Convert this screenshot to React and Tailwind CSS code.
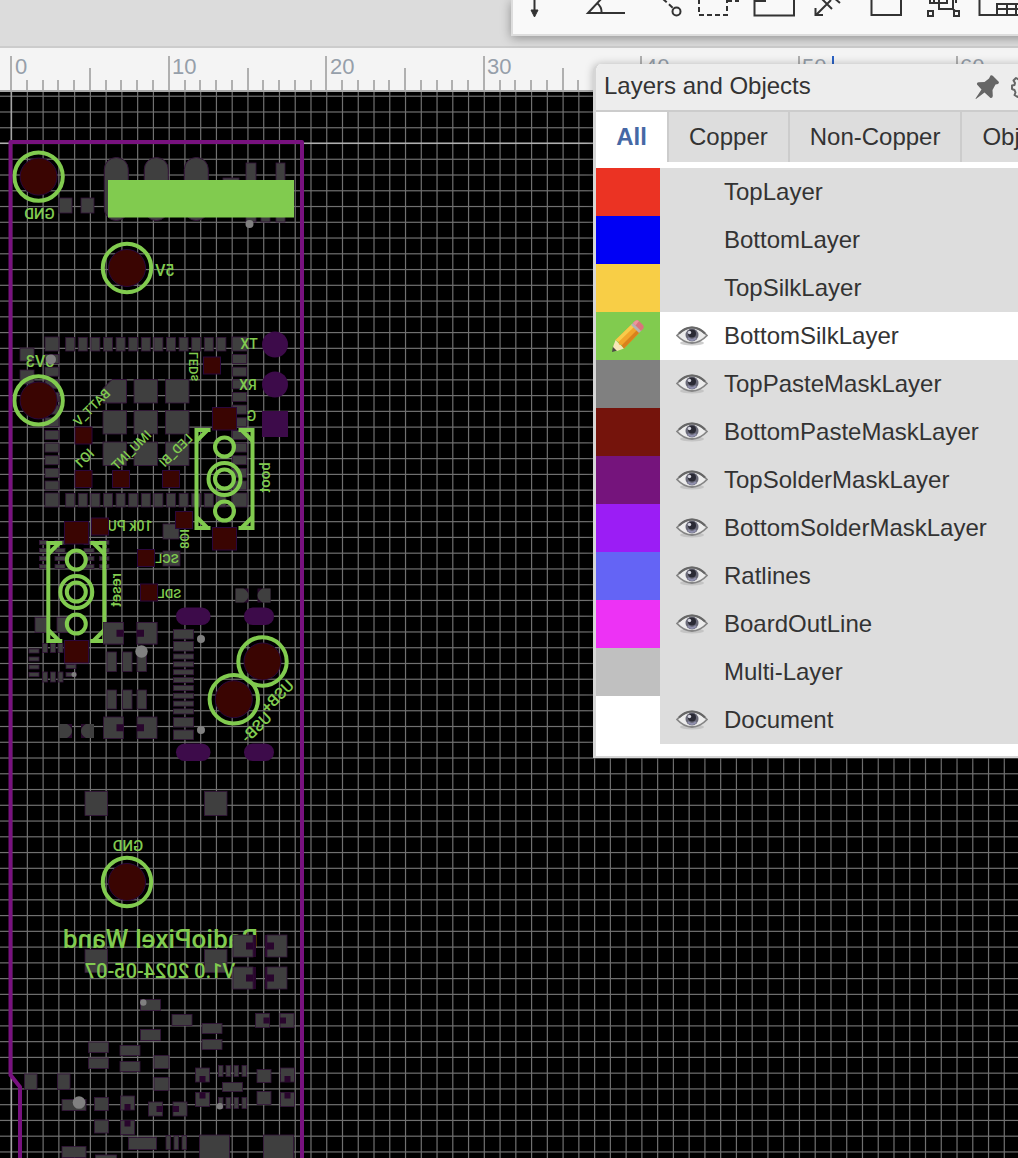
import React from "react";

const STEP = 15.757;
const ORIGIN_X = 11.5;
const ORIGIN_Y = 143.4;
const SILK = "#81cb4f";

const layers = [
  { name: "TopLayer", swatch: "bg-[#eb3323]", visible: false },
  { name: "BottomLayer", swatch: "bg-[#0000f5]", visible: false },
  { name: "TopSilkLayer", swatch: "bg-[#f8ce46]", visible: false },
  { name: "BottomSilkLayer", swatch: "bg-[#81cb4f]", visible: true, active: true },
  { name: "TopPasteMaskLayer", swatch: "bg-[#808080]", visible: true },
  { name: "BottomPasteMaskLayer", swatch: "bg-[#75140c]", visible: true },
  { name: "TopSolderMaskLayer", swatch: "bg-[#75147c]", visible: true },
  { name: "BottomSolderMaskLayer", swatch: "bg-[#9b1df5]", visible: true },
  { name: "Ratlines", swatch: "bg-[#6464f5]", visible: true },
  { name: "BoardOutLine", swatch: "bg-[#ed32f5]", visible: true },
  { name: "Multi-Layer", swatch: "bg-[#c0c0c0]", visible: false },
  { name: "Document", swatch: "bg-white", visible: true },
];

const range = (n) => Array.from({ length: n }, (_, i) => i);

/* ---------- Toolbar ---------- */

const tools = [
  { label: "Arrow", x: 513, w: "w-[45px]", width: 45, art: (
    <>
      <path d="M534.5 0V12" />
      <path d="M531 10h7l-3.500 7z" fill="#333" strokeWidth="1" />
    </>
  ) },
  { label: "Angle", x: 558, w: "w-[92px]", width: 92, art: (
    <path d="M625 13H588L602 -2M597 3Q602 7 601.500 13" />
  ) },
  { label: "Track", x: 650, w: "w-[42px]", width: 42, art: (
    <>
      <path d="M663 -1L673 8" strokeDasharray="5 3" />
      <circle cx="676.500" cy="11.500" r="4" />
    </>
  ) },
  { label: "Select area", x: 692, w: "w-[53px]", width: 53, art: (
    <>
      <path d="M699 -1V15H727V-1" strokeDasharray="5 3" />
      <path d="M727 1H739" strokeDasharray="5 3" />
    </>
  ) },
  { label: "Board outline", x: 745, w: "w-[58px]", width: 58, art: (
    <path d="M754.500 -1V15.500H794V-4M754.500 1H765V-2" />
  ) },
  { label: "Dimension", x: 803, w: "w-[54px]", width: 54, art: (
    <path d="M816 15L831 0M815.500 8V15H823M822 -1L832 9M833 -3L840 3" />
  ) },
  { label: "Rectangle", x: 857, w: "w-[58px]", width: 58, art: (
    <path d="M871.500 -1V15H901V-1" />
  ) },
  { label: "Group", x: 915, w: "w-[55px]", width: 55, art: (
    <path d="M928 11h5v5h-5zM954 11h5v5h-5zM934 -1V3H947V-1M939 -1V9H953V-1M930 0V3H934M953 9L955 11M956 3V-2" />
  ) },
  { label: "Panelize", x: 970, w: "w-[60px]", width: 60, art: (
    <path d="M979.500 -1V15H1022M997 15V4H1022M997 9H1022M1007 4V15M1016 4V15" />
  ) },
];

function Toolbar() {
  return (
    <div
      role="toolbar"
      aria-label="PCB tools"
      className="absolute top-0 left-[511px] flex h-9 border-b-2 border-l-2 border-[#dddddd] bg-[#f9f9f9] shadow-[0_2px_10px_rgba(0,0,0,0.35)]"
    >
      {tools.map((t) => (
        <button key={t.label} type="button" aria-label={t.label} className={`h-full shrink-0 ${t.w}`}>
          <svg
            className="block h-[34px] w-full"
            viewBox={`${t.x} 0 ${t.width} 34`}
            fill="none"
            stroke="#333"
            strokeWidth="2"
          >
            {t.art}
          </svg>
        </button>
      ))}
    </div>
  );
}

/* ---------- Ruler ---------- */

function Ruler() {
  return (
    <svg className="block h-[44px] w-full shrink-0 bg-[#f4f4f4]" aria-label="Horizontal ruler in millimetres">
      {range(240).map((i) => {
        const x = Math.round(ORIGIN_X - 1.3 + i * STEP);
        const top = i % 10 === 0 ? 8 : i % 5 === 0 ? 20 : 32;
        return <rect key={i} x={x} y={top} width="2" height={43 - top} fill="#b0b0b0" />;
      })}
      {range(7).map((i) => (
        <text
          key={i}
          x={Math.round(ORIGIN_X + i * 10 * STEP) + 3}
          y="26"
          fontFamily="Liberation Sans, Arial, sans-serif"
          fontSize="22"
          fill="#969faa"
        >
          {i * 10}
        </text>
      ))}
      <rect x="832" y="8" width="2" height="35" fill="#2b62c4" />
      <rect x="0" y="42" width="100%" height="2" fill="#a8a8a8" />
    </svg>
  );
}

/* ---------- Board ---------- */

const pads = [
  [59, 198, 13, 15], [81, 198, 13, 15],
  [246, 163, 10, 59], [276, 163, 9, 59], [223, 178, 16, 30], [261, 190, 9, 32],
  [45, 337, 14, 14], [232, 337, 15, 14], [45, 493, 14, 14], [232, 493, 15, 14],
  [20, 348, 14, 13], [20, 370, 14, 14],
  ...range(13).flatMap((i) => [
    [65.7 + i * 12.6, 337.5, 9, 13.5],
    [65.7 + i * 12.6, 493.5, 9, 13.5],
  ]),
  ...range(11).flatMap((i) => [
    [45, 354.5 + i * 12.65, 14, 9],
    [232.5, 354.5 + i * 12.65, 14, 9],
  ]),
  [134, 379.5, 23.5, 23.5], [165.5, 379.5, 23.5, 23.5],
  ...[103, 134, 165.5].flatMap((x) => [[x, 410.5, 23.5, 23.5], [x, 442, 23.5, 23.5]]),
  [163, 524, 16, 15], [163, 551, 17, 15],
  ...[540.5, 548.5, 556.5, 564.5].flatMap((y) => [
    [39.5, y, 8, 4], [55, y, 10, 4], [84, y, 10, 4], [99.5, y, 9.5, 4],
  ]),
  [35, 617.5, 12, 15], [57, 617.5, 12, 15],
  ...[649, 657, 665, 672.5].map((y) => [29, y, 10, 4]),
  ...[42.5, 50.5, 58].flatMap((x) => [[x, 643.5, 5, 9], [x, 672, 5, 10]]),
  [66, 664.5, 10, 4], [66, 672.5, 10, 4],
  ...[107, 122.5, 137].flatMap((x) => [[x, 652, 9.5, 19.5], [x, 690, 9.5, 19]]),
  [173.5, 629.5, 20, 9.5], [173.5, 641.5, 20, 9.5],
  ...range(8).map((i) => [173.5, 654 + i * 7.85, 20, 5]),
  [173.5, 717.5, 20, 9.5], [173.5, 730, 20, 9.5],
  [85, 791.5, 22.5, 24], [204.5, 791.5, 22.5, 24], [85, 949.5, 22.5, 23], [204.5, 949.5, 22.5, 23],
  [140.5, 999.5, 20, 11], [172, 1014.5, 20, 11], [140.5, 1029.5, 20, 11],
  [202, 1023.5, 20, 10], [202, 1039.5, 20, 10],
  [88.5, 1042, 20, 10.5], [88.5, 1058, 20, 10.5], [120, 1045.5, 20, 10], [120, 1061.5, 20, 10],
  [154, 1055.5, 15, 13], [154, 1077.5, 15, 13],
  [24.5, 1074, 12.5, 15.5], [57.5, 1074, 12.5, 15.5],
  [62, 1099.5, 24, 11], [94.5, 1097.5, 14, 13], [94.5, 1120, 14, 13],
  [257, 1069.5, 14, 13], [257, 1091.5, 14, 13], [222.5, 1082.5, 20, 9],
  ...[218.5, 226, 234, 242].flatMap((x) => [[x, 1065.5, 4.5, 11], [x, 1097.5, 4.5, 11]]),
  [128.5, 1137.5, 28, 12], [166, 1135.5, 4.5, 14], [174, 1135.5, 4.5, 14], [182, 1135.5, 4.5, 14],
  [199.5, 1135, 30, 30], [263.5, 1135, 30, 30], [62, 1146.5, 24, 11], [95.5, 1155, 21, 10],
];

const notched = [
  [103.5, 622.5, 20, 21.5, "r"], [137, 622.5, 20, 21.5, "l"],
  [103.5, 717, 20, 21.5, "r"], [137, 717, 20, 21.5, "l"],
  [120.5, 1096, 14, 14, "b"], [120.5, 1120.5, 14, 14, "t"],
  [148.5, 1102, 14, 14, "r"], [173, 1102, 14, 14, "l"],
  [195.5, 1068, 14, 14, "b"], [195.5, 1092.5, 14, 14, "t"],
  [280.5, 1068, 14, 14, "b"], [280.5, 1092.5, 14, 14, "t"],
  [255.5, 1013.5, 14, 14, "r"], [280, 1013.5, 14, 14, "l"],
];

const titlePads = [
  [233, 935, 20, 22, "r"], [267, 935, 20, 22, "l"],
  [233, 967, 20, 22, "r"], [267, 967, 20, 22, "l"],
];

const bottomPads = [
  [203.5, 357, 17], [75, 427, 17], [75, 470.5, 17], [112.5, 470.5, 17], [162.5, 470.5, 17],
  [175.5, 511.5, 17], [91.5, 518, 17], [137.5, 549.5, 17], [140.5, 584, 17],
  [212.5, 407.5, 24], [212.5, 527.5, 24], [64.5, 521.5, 24], [64.5, 640.5, 24],
];

const vias = [
  [249.5, 224, 4], [51, 359.5, 5], [74, 674.5, 2.5], [141.5, 651.5, 6.2], [201, 639, 4], [201, 730, 4],
  [143.3, 1002.5, 3.2], [79, 1102.5, 6.3], [219.8, 1106.2, 3.2],
];

const rings = [[38.6, 176.6], [127, 268], [38.6, 400.4], [262.5, 661.5], [233.8, 699.2], [127, 882]];

const labels = [
  ["GND", 39.5, 213.5, 15, 0], ["5V", 165, 270, 16, 0], ["3V3", 40, 361, 16, 0],
  ["TX", 249, 343.5, 14, 0], ["RX", 248, 384.5, 14, 0], ["G", 251.5, 416, 14, 0],
  ["LEDs", 193, 366.5, 13, -90], ["boot", 265, 477.5, 15, -90], ["reset", 115.5, 590, 15, -90],
  ["IO8", 183.5, 539, 13, -90], ["BATT_V", 91.5, 407, 13, -45], ["IO1", 84, 458.5, 14, -45],
  ["IMU_INT", 131, 450, 13, -45], ["LED_BI", 175.5, 450, 13, -45],
  ["10k PU", 130, 526, 14, 0], ["SCL", 167, 558, 13, 0], ["SDL", 169.5, 592.5, 13, 0],
  ["USB+", 277, 696, 16, -45], ["USB-", 256, 727, 16, -45], ["GND", 128, 846, 15, 0],
  ["RadioPixel Wand", 160.5, 939, 26, 0], ["V1.0 2024-05-07", 160, 970.5, 20, 0],
];

function Pad({ x, y, w, h, notch }) {
  const k = w > 16 ? 7 : 6;
  const at = {
    r: [x + w - k, y + h / 2 - k / 2],
    l: [x, y + h / 2 - k / 2],
    t: [x + w / 2 - k / 2, y],
    b: [x + w / 2 - k / 2, y + h - k],
  }[notch];
  return (
    <g>
      <rect x={x} y={y} width={w} height={h} fill="#3f3f3f" stroke="#34153a" strokeWidth="0.800" />
      {at && <rect x={at[0]} y={at[1]} width={k} height={k} fill="#28052c" />}
    </g>
  );
}

function SilkLabel({ text, x, y, size, angle }) {
  return (
    <text
      transform={`translate(${x} ${y}) rotate(${angle}) scale(-1 1)`}
      y={Math.round(size * 0.36)}
      textAnchor="middle"
      fontFamily="Roboto, Liberation Sans, Arial, sans-serif"
      fontWeight="500"
      fontSize={size}
      fill={SILK}
    >
      {text}
    </text>
  );
}

function Switch({ x, y }) {
  return (
    <g transform={`translate(${x} ${y})`} fill="none" stroke={SILK} strokeWidth="4">
      <path d="M-14 -49H-28V49H-14M14 -49H28V49H14" />
      <path d="M-28 -38L-17 -49M28 -38L17 -49M-28 38L-17 49M28 38L17 49" />
      <circle cy="-32" r="9.500" />
      <circle cy="32" r="9.500" />
      <circle r="9.500" />
      <circle r="16" />
    </g>
  );
}

function Board() {
  return (
    <svg className="block min-h-[1066px] w-full flex-1 bg-black" role="img" aria-label="RadioPixel Wand board">
      <g transform="translate(0 -92)">
        <g fill="#707070">
          {range(170).map((i) => (
            <rect key={`v${i}`} x={ORIGIN_X - 0.5 + i * STEP} y="92" width="1.200" height="2400" />
          ))}
          {range(150).map((i) => (
            <rect key={`h${i}`} x="0" y={ORIGIN_Y - 0.5 + (i - 3) * STEP} width="2600" height="1.200" />
          ))}
        </g>
        <rect x="10.500" y="92" width="1.500" height="2400" fill="#a5a5a5" />
        <rect x="0" y="142.500" width="2600" height="1.500" fill="#b0b0b0" />

        {[104.3, 144.3, 184.3].map((x) => (
          <rect key={x} x={x} y="157.500" width="24" height="63" rx="12" fill="#3f3f3f" stroke="#34153a" />
        ))}
        {pads.map(([x, y, w, h], i) => (
          <Pad key={i} x={x} y={y} w={w} h={h} />
        ))}
        {notched.map(([x, y, w, h, n], i) => (
          <Pad key={i} x={x} y={y} w={w} h={h} notch={n} />
        ))}
        <path d="M112 379.500H126.500V403H103V388.500Z" fill="#3f3f3f" stroke="#34153a" />
        {[[235.5, 588.5], [59, 724]].map(([x, y]) => (
          <g key={x} transform={`translate(${x} ${y})`}>
            <path d="M0 0H13V14H0ZM22 0H35V14H22Z" fill="#280a2c" />
            <path d="M0 0H8Q13 3 13 7T8 14H0ZM35 0H27Q22 3 22 7T27 14H35Z" fill="#3f3f3f" />
          </g>
        ))}

        <g fill="#3d0b4a">
          <circle cx="275" cy="344.500" r="13" />
          <circle cx="275" cy="384.500" r="13" />
          <rect x="262" y="411" width="26" height="26" />
          {[607.5, 743.5].map((y) => (
            <g key={y}>
              <rect x="176" y={y} width="34.500" height="17.500" rx="8.700" />
              <rect x="244" y={y} width="30" height="17.500" rx="8.700" />
            </g>
          ))}
        </g>

        {labels.map(([text, x, y, size, angle], i) => (
          <SilkLabel key={i} text={text} x={x} y={y} size={size} angle={angle} />
        ))}
        <rect x="108" y="180" width="186" height="37.500" fill={SILK} />
        <Switch x={224.5} y={479} />
        <Switch x={76.3} y={592} />

        {bottomPads.map(([x, y, s], i) => (
          <rect key={i} x={x} y={y} width={s} height={s === 24 ? 22.5 : s} fill="#3a0502" stroke="#2b073b" />
        ))}
        {[[103.5, 622.5, "r"], [137, 622.5, "l"]].map(([x, y, n]) => (
          <Pad key={x} x={x} y={y} w={20} h={21.5} notch={n} />
        ))}
        {titlePads.map(([x, y, w, h, n], i) => (
          <g key={i}>
            <rect x={n === "r" ? x + 12 : x - 2} y={y} width="11" height={h} fill="#28052c" />
            <Pad x={x} y={y} w={w} h={h} notch={n} />
          </g>
        ))}
        {rings.map(([x, y], i) => (
          <g key={i}>
            <circle cx={x} cy={y} r="24.200" fill="none" stroke={SILK} strokeWidth="4" />
            <circle cx={x} cy={y} r="18.500" fill="#3a0502" stroke="#2b073b" />
          </g>
        ))}
        {vias.map(([x, y, r], i) => (
          <circle key={i} cx={x} cy={y} r={r} fill="#808080" />
        ))}
        <path
          d="M302 2400V142H10.500V1075L20 1087V2400"
          fill="none"
          stroke="#78127f"
          strokeWidth="4"
          strokeLinejoin="round"
        />
      </g>
    </svg>
  );
}

/* ---------- Layers panel ---------- */

function EyeIcon() {
  return (
    <svg className="block h-6 w-8" viewBox="0 0 32 24" aria-hidden="true">
      <ellipse cx="16" cy="19" rx="12" ry="2.500" fill="#b9b9b9" opacity="0.700" />
      <path d="M1 11.500Q8 3.500 16 3.500T31 11.500Q24 19 16 19T1 11.500Z" fill="#ececec" stroke="#858585" strokeWidth="1.800" />
      <path d="M3 9.500Q9 3.500 16 3.500T29 9.500" fill="none" stroke="#666" strokeWidth="2" />
      <circle cx="16" cy="11" r="6.500" fill="#6a6a78" />
      <circle cx="16" cy="9.500" r="4" fill="#2b2b35" />
      <path d="M12 14Q16 18 20 14" fill="none" stroke="#8f8fac" strokeWidth="2" />
      <circle cx="13.500" cy="8.500" r="1.700" fill="#d5d5e0" />
    </svg>
  );
}

function PencilIcon() {
  return (
    <svg className="mx-auto block size-8" viewBox="0 0 32 32" aria-hidden="true">
      <path d="M0 32L1 26L5.500 30.500Z" fill="#4b4a45" />
      <path d="M1 27L3.500 20L12 28.500L5 31Z" fill="#f6e7b6" />
      <path d="M3.500 20L20 4L28 12L12 28.500L10 25L7 24.500L6.500 21Z" fill="#f2a52c" />
      <path d="M3.500 20L20 4L22.500 6.500L6.500 22Z" fill="#f9cb4b" />
      <path d="M9.500 25.500L25.500 9.500L28 12L12 28.500Z" fill="#d9811d" />
      <path d="M19 5L21.500 2.500L29.500 10.500L27 13Z" fill="#b6b3b2" />
      <path d="M21 3L23 1Q25 -0.500 27 1L31 5Q32.500 7 31 9L29 11Z" fill="#d9747c" />
      <path d="M21 3L23 1Q25 -0.500 27 1L23.500 5.500Z" fill="#eb969b" />
    </svg>
  );
}

function PinIcon() {
  return (
    <svg className="block size-6" viewBox="0 0 24 24" fill="#666" aria-hidden="true">
      <path d="M15.500 0.500Q17 0 18 1L23.500 6.500Q24.500 8 23 9L20.500 9.500L17.500 15L17.800 21Q17.500 23.500 15.500 23L9.500 17.500L1 24L0.500 23.500L6.500 14.500L2 9.500Q1.500 7.500 3.500 7.200L9.500 7L14 3.500Z" />
    </svg>
  );
}

function GearIcon() {
  return (
    <svg className="block size-6" viewBox="0 0 24 24" fill="none" stroke="#666" strokeWidth="2" strokeLinejoin="round" aria-hidden="true">
      <path d="M9.500 1.500H14.500L15 4L17 5L19.500 3.500L22 6.500L20.500 9L21 10.500L23 11V14L20.500 15L19.500 17.500L20.500 20L17.500 22L15.500 20.500L14 22.500H10L8.500 20.500L6.500 22L3.500 20L4.500 17.500L3.500 15L1 14V10.500L3.500 10L4 8L2.500 5.500L5 3L7.500 4.500L9 4Z" />
      <circle cx="12" cy="12" r="4" />
    </svg>
  );
}

const tabs = ["All", "Copper", "Non-Copper", "Objects"];

function LayersPanel() {
  return (
    <section
      aria-label="Layers and Objects"
      className="absolute top-16 left-[593px] w-[452px] overflow-hidden rounded-tl-lg border-b-2 border-l-[3px] border-[#d6d6d6] bg-white text-2xl text-[#333333] shadow-[0_0_8px_rgba(0,0,0,0.25)]"
    >
      <header className="flex h-12 items-center border-b-2 border-[#cccccc] bg-[#ededed] pr-[10px] pb-[2px] pl-2">
        <h2 className="flex-1">Layers and Objects</h2>
        <div className="flex items-center gap-3 pt-[2px]">
          <button type="button" aria-label="Pin panel"><PinIcon /></button>
          <button type="button" aria-label="Panel settings"><GearIcon /></button>
        </div>
      </header>
      <div role="tablist" className="flex h-[50px] bg-[#dddddd]">
        {tabs.map((t, i) => (
          <button
            key={t}
            type="button"
            role="tab"
            aria-selected={i === 0}
            className={
              i === 0
                ? "h-full w-[71px] shrink-0 bg-white font-bold text-[#4668a5]"
                : "h-full shrink-0 border-l-2 border-[#cccccc] px-5"
            }
          >
            {t}
          </button>
        ))}
      </div>
      <ul className="pt-[6px] pb-3">
        {layers.map((l) => (
          <li key={l.name} className={`flex h-12 items-center ${l.active ? "bg-white" : "bg-[#dddddd]"}`}>
            <button type="button" aria-label={`Edit ${l.name}`} className={`h-full w-16 shrink-0 ${l.swatch}`}>
              {l.active && <PencilIcon />}
            </button>
            <button type="button" aria-label={`Toggle ${l.name}`} className="flex h-full w-16 shrink-0 items-center justify-center">
              {l.visible && <EyeIcon />}
            </button>
            <span>{l.name}</span>
          </li>
        ))}
      </ul>
    </section>
  );
}

export default function App() {
  return (
    <main className="relative flex min-h-screen flex-col overflow-hidden bg-[#dcdcdc] font-['Liberation_Sans',Arial,sans-serif]">
      <div className="h-12 shrink-0 border-b-2 border-[#cccccc]" />
      <Ruler />
      <Board />
      <Toolbar />
      <LayersPanel />
    </main>
  );
}
